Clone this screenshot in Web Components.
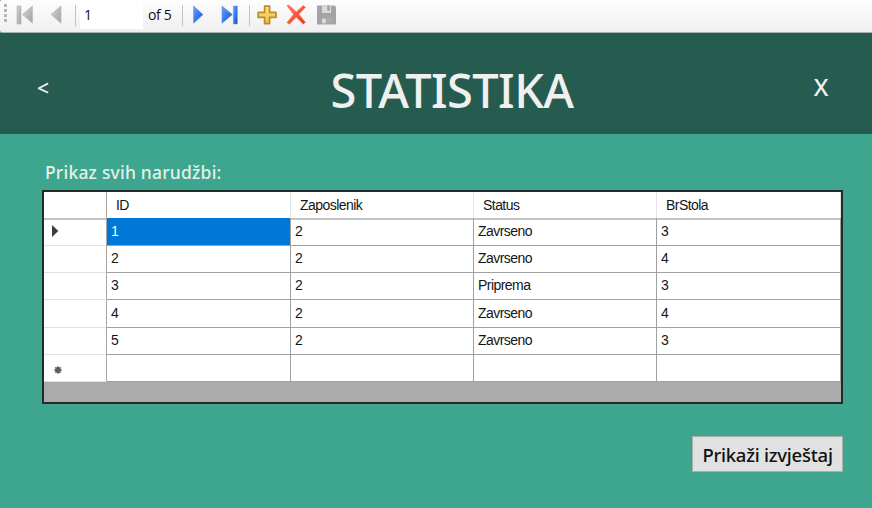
<!DOCTYPE html>
<html lang="hr"><head><meta charset="utf-8"><title>Statistika</title>
<style>html,body{margin:0;height:100%;overflow:hidden;background:#3ea58e}</style></head><body>
<stats-window></stats-window>
<script>
const define=(name,html)=>{
  const t=document.createElement('template');t.innerHTML=html;
  customElements.define(name,class extends HTMLElement{
    constructor(){super();this.attachShadow({mode:'open'}).append(t.content.cloneNode(true));}
  });
};

const defs=`<defs>
<linearGradient id="g" x2="1" y2="1"><stop stop-color="#d4d4d4"/><stop offset="1" stop-color="#a2a2a2"/></linearGradient>
<linearGradient id="b" x2="1" y2="1"><stop stop-color="#6ba4f8"/><stop offset=".5" stop-color="#3a78ea"/><stop offset="1" stop-color="#1848b4"/></linearGradient>
<linearGradient id="y" x2="0" y2="1"><stop stop-color="#ffe070"/><stop offset="1" stop-color="#efc04a"/></linearGradient>
<linearGradient id="r" x2="1" y2="1"><stop stop-color="#ff8068"/><stop offset="1" stop-color="#ee3010"/></linearGradient></defs>`;
const icons={
  first:'<rect x="1" y="1" width="4" height="18" fill="url(#g)" stroke="#b4b4b4" stroke-width=".6"/><path d="M16.5.8V18.2L6.4 9.5Z" fill="url(#g)" stroke="#b8b8b8" stroke-width=".6"/>',
  prev:'<path d="M14 .8V18.2L4 9.5Z" fill="url(#g)" stroke="#b8b8b8" stroke-width=".6"/>',
  next:'<path d="M5.6 1V18.2L15 9.6Z" fill="url(#b)" stroke="#5a8ee8" stroke-width=".6"/>',
  last:'<path d="M2 1V18.2L12.4 9.6Z" fill="url(#b)" stroke="#5a8ee8" stroke-width=".6"/><rect x="13.2" y="1" width="4.2" height="18" fill="url(#b)" stroke="#6c9cec" stroke-width=".5"/>',
  add:'<path d="M7.6 1.2h5v6.2h6.4v5h-6.4v6.3h-5v-6.3H1.2v-5h6.4Z" fill="url(#y)" stroke="#ba8d2c" stroke-width="1.7" stroke-linejoin="round"/>',
  del:'<path d="M1 .7Q3-.8 4.8 1.8L10.3 7 17.2.6 19.4 2.3 12.7 9.2 19.3 17.2 17.3 19.2 10.3 12 3.4 19.2 1 17.4 7.7 9.4Z" fill="url(#r)" stroke="#ff6850" stroke-width=".7"/>',
  save:'<path d="M1 .5H18.5L20 2V19.5H1Z" fill="#a4a4a4"/><path d="M6 .5h9V8H6Z" fill="#d9d9d9"/><path d="M11.3.5h2.4v5.2h-2.4Z" fill="#a0a0a0"/><path d="M5.5 13h10.5v5H5.5Z" fill="#acacac"/><path d="M6.2 13.7h3.5v4.5H6.2Z" fill="#dedede"/>',
  row:'<path d="M1 0V12L7.4 6Z" fill="#3e3e3e"/>',
  star:'<circle cx="4" cy="4" r="2.9" fill="#444"/><path d="M4 0V8M0 4H8M1.2 1.2 6.8 6.8M6.8 1.2 1.2 6.8" stroke="#666" stroke-width="1"/>'
};
customElements.define('glyph-icon',class extends HTMLElement{
  constructor(){super();this.attachShadow({mode:'open'});}
  connectedCallback(){
    const w=this.getAttribute('w')||20,h=this.getAttribute('h')||20;
    this.shadowRoot.innerHTML=`<style>:host{display:block;flex:none;line-height:0}svg{overflow:visible}</style><svg width="${w}" height="${h}" viewBox="0 0 ${w} ${h}">${defs}${icons[this.getAttribute('name')]}</svg>`;
  }
});

define('record-navigator',`<style>
:host{display:flex;box-sizing:border-box;height:33px;background:linear-gradient(#fdfdfd,#efefef);border-bottom:1px solid #a9b5b1;border-radius:2px 0 0 3px;padding-top:5px;align-items:flex-start;font:14px "Open Sans","Noto Sans",sans-serif;color:#111}
.grip{flex:none;width:3px;height:18px;margin:-1px 9px 0 4px;background:repeating-linear-gradient(#b5b5b5 0 3px,transparent 3px 5px)}
i{width:1px;height:21px;background:#c2c2c2;flex:none}
input{all:unset;flex:none;box-sizing:border-box;width:63px;height:28px;margin:-4px 0 0 4px;padding-left:4px;background:#fff;line-height:28px}
span{flex:none;line-height:20px;letter-spacing:-.35px;width:27px;margin-left:5px;white-space:nowrap}
.p{margin-left:11px}.s1{margin-left:8px}.s2{margin-left:7px}.n{margin-left:5px}.l{margin-left:12px}.s3{margin-left:9px}.a{margin-left:7px}.d{margin-left:9px}.v{margin-left:10px}
</style><div class="grip"></div><glyph-icon name="first"></glyph-icon><glyph-icon class="p" name="prev"></glyph-icon><i class="s1"></i>
<input value="1" aria-label="Position"><span>of 5</span><i class="s2"></i><glyph-icon class="n" name="next"></glyph-icon><glyph-icon class="l" name="last"></glyph-icon><i class="s3"></i><glyph-icon class="a" name="add"></glyph-icon><glyph-icon class="d" name="del"></glyph-icon><glyph-icon class="v" name="save"></glyph-icon>`);

define('title-bar',`<style>
:host{display:grid;grid-template-columns:88px 1fr 102px;height:101px;background:#255c4f;color:#f0f0f0;font-family:"Noto Sans",sans-serif}
h1{margin:0;font-size:47px;font-weight:500;line-height:115px;text-align:center;padding-left:46px;letter-spacing:-.6px;white-space:nowrap}
.b{font:500 21px/110px "Noto Sans",sans-serif;padding-left:37px}.x{font:500 24px/107px "Noto Sans",sans-serif;text-align:center}
</style><div class="b">&lt;</div><h1><slot></slot></h1><div class="x">X</div>`);

customElements.define('orders-grid',class extends HTMLElement{
  constructor(){
    super();
    const rows=[[1,2,'Zavrseno',3],[2,2,'Zavrseno',4],[3,2,'Priprema',3],[4,2,'Zavrseno',4],[5,2,'Zavrseno',3]];
    this.attachShadow({mode:'open'}).innerHTML=`<style>
:host{display:block;box-sizing:border-box;height:214px;border:2px solid #202c29;background:#ababab;font:14px "Liberation Sans",Arial,sans-serif;color:#151515;letter-spacing:-.55px}
.r{display:grid;grid-template-columns:63px 184px 183px 183px 1fr;height:27.4px;background:#fff}
.r>*{box-sizing:border-box;border-right:1px solid #a0a0a0;border-bottom:1px solid #a0a0a0;padding-left:4px;line-height:27px;white-space:nowrap}
.r>:first-child{border-bottom-color:#e2e2e2;border-right-color:#a8a8a8;display:flex;align-items:center;padding-left:7px}
.h{height:25.5px}.h>*{border-right-color:#e5e5e5;border-bottom:2px solid #c3c3c3;padding-left:9px;line-height:26px}
.h>:first-child{border-bottom-color:#c3c3c3}
.sel{background:#0078d7;color:#fff}.new>:first-child{padding-left:10px;padding-top:4px}
</style><div class="r h"><div></div>${['ID','Zaposlenik','Status','BrStola'].map(x=>`<div>${x}</div>`).join('')}</div>
${rows.map((r,i)=>`<div class="r"><div>${i?'':'<glyph-icon name="row" w="8" h="12"></glyph-icon>'}</div>${r.map((c,j)=>`<div class="${i+j?'':'sel'}">${c}</div>`).join('')}</div>`).join('')}
<div class="r new"><div><glyph-icon name="star" w="8" h="8"></glyph-icon></div><div></div><div></div><div></div><div></div></div>`;
  }
});

define('report-button',`<style>:host{display:block;width:151px;height:36px}button{all:unset;box-sizing:border-box;width:100%;height:100%;background:#e1e1e1;border:1px solid #adadad;text-align:center;font:500 18.5px/35px "Noto Sans",sans-serif;letter-spacing:-.25px;color:#111;white-space:nowrap}</style><button><slot></slot></button>`);

define('stats-window',`<style>
:host{display:block;width:872px;height:508px;background:#3ea58e}
main{display:flex;flex-direction:column;padding:26px 29px 0 42px}
label{font:500 17.5px/25px "Noto Sans",sans-serif;letter-spacing:.2px;height:30px;padding-left:3px;color:#e4f0e9;white-space:nowrap}
report-button{align-self:flex-end;margin:32px 0 0 0}
</style><record-navigator></record-navigator><title-bar>STATISTIKA</title-bar><main><label>Prikaz svih narudžbi:</label><orders-grid></orders-grid><report-button>Prikaži izvještaj</report-button></main>`);
</script></body></html>
